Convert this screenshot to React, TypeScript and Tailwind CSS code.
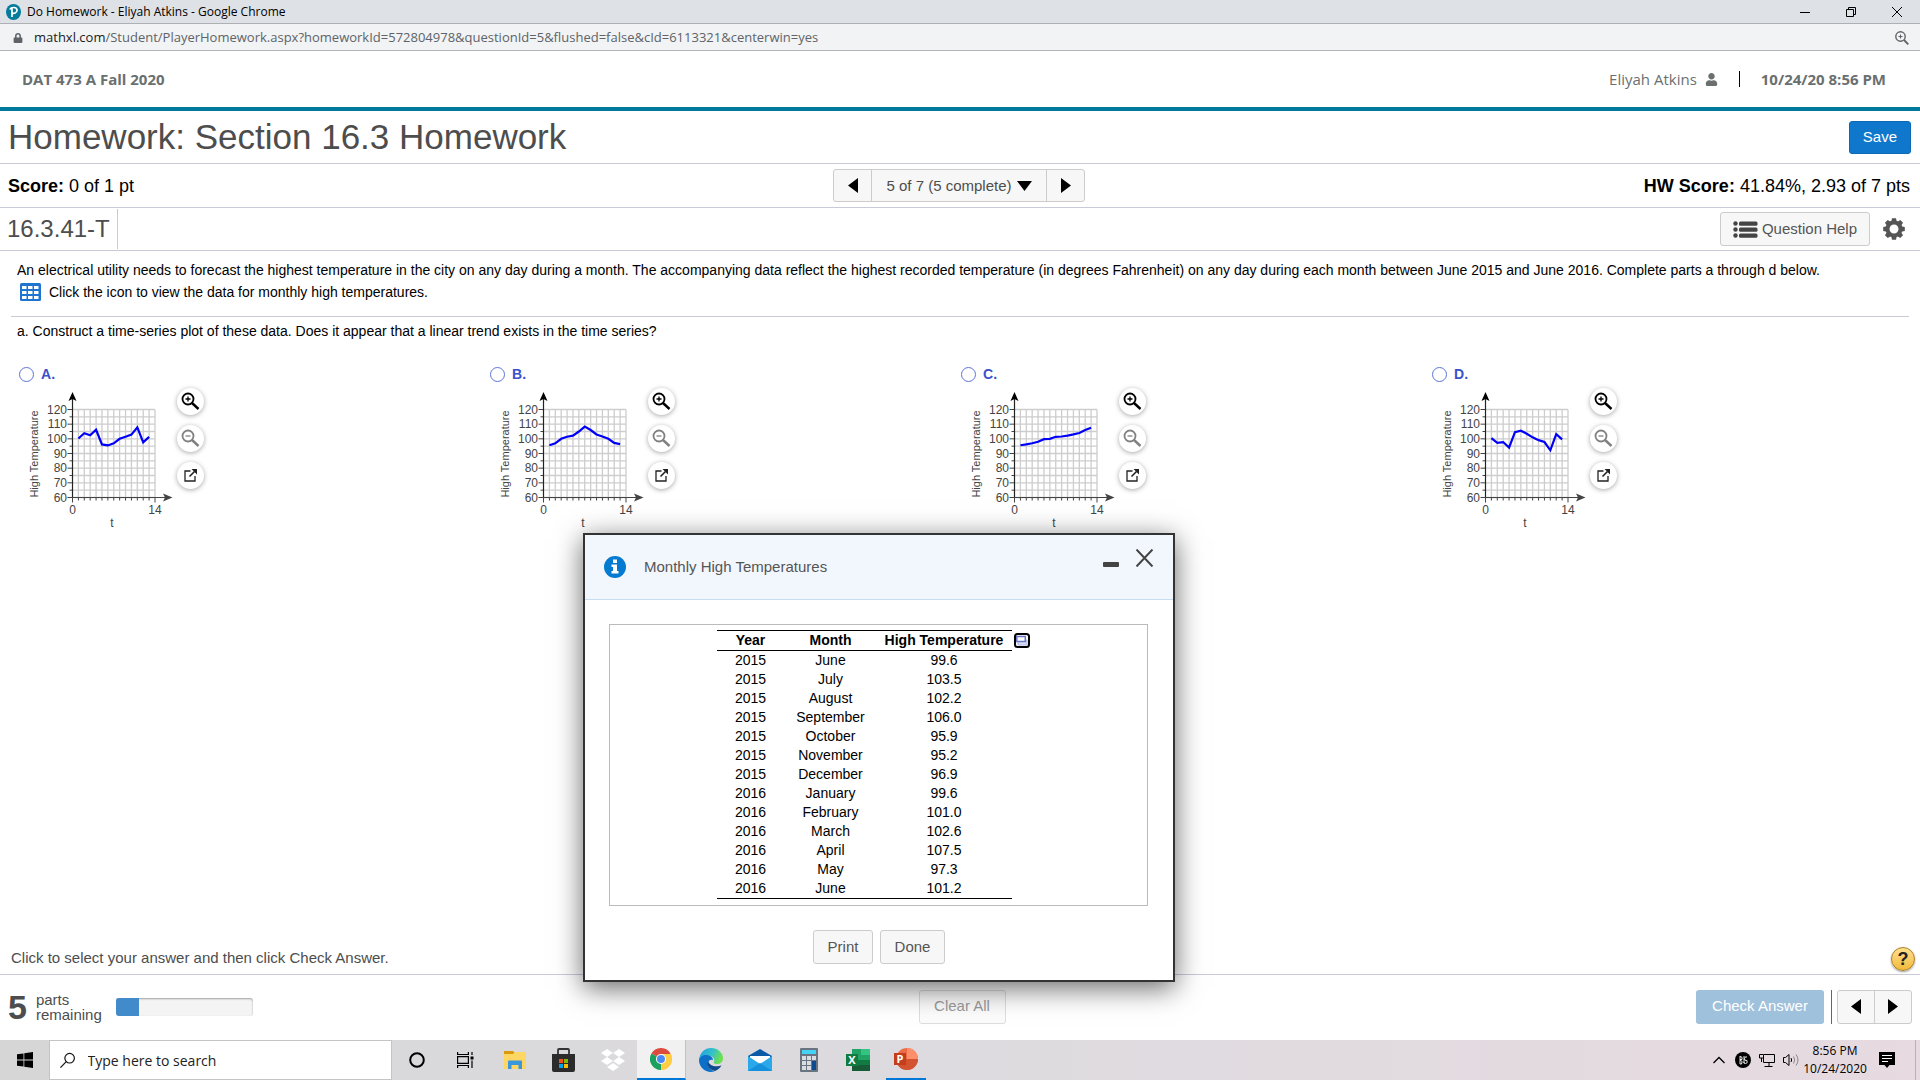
import type { ReactNode } from "react";
import { FaUser, FaLock } from "react-icons/fa";

type Option = {
    letter: string;
    values: number[];
};

const options: Option[] = [
    {
        letter: "A",
        values: [100.2, 103.8, 102.4, 106.2, 96.2, 95.5, 96.9, 100, 101.4, 102.9, 107.8, 97.6, 101.3],
    },
    {
        letter: "B",
        values: [95.6, 96.9, 100, 101.4, 102.2, 105, 108.3, 106, 103, 101.6, 100, 97.2, 96.4],
    },
    {
        letter: "C",
        values: [95.6, 96.2, 97, 98, 99.8, 100, 101.4, 101.6, 102.2, 103, 104, 106, 107.6],
    },
    {
        letter: "D",
        values: [100.5, 97.3, 97.8, 94, 104.6, 105.5, 103.5, 101, 99.1, 97.8, 92.2, 103.2, 99.6],
    },
];

const temperatures = [
    ["2015", "June", "99.6"],
    ["2015", "July", "103.5"],
    ["2015", "August", "102.2"],
    ["2015", "September", "106.0"],
    ["2015", "October", "95.9"],
    ["2015", "November", "95.2"],
    ["2015", "December", "96.9"],
    ["2016", "January", "99.6"],
    ["2016", "February", "101.0"],
    ["2016", "March", "102.6"],
    ["2016", "April", "107.5"],
    ["2016", "May", "97.3"],
    ["2016", "June", "101.2"],
];

/* Plot geometry */
const X0 = 55.5;
const X1 = 138;
const Y0 = 109.5;
const Y1 = 21.5;
const px = (t: number) => X0 + (t * (X1 - X0)) / 14;
const py = (v: number) => Y0 - ((v - 60) * (Y0 - Y1)) / 60;

const Chart = ({ letter, values }: Option) => {
    const points = values.map((v, i) => `${px(i + 1)},${py(v)}`).join(" ");
    const majors = [60, 70, 80, 90, 100, 110, 120];
    const minors = [65, 75, 85, 95, 105, 115];
    const columns = Array.from({ length: 14 }, (_, i) => i + 1);

    return (
        <svg
            width="160"
            height="148"
            viewBox="0 0 160 148"
            role="img"
            aria-label={`Time-series plot ${letter}`}
            className="shrink-0 font-['Liberation_Sans',Arial,sans-serif]"
        >
            <g stroke="#cdcdcd" strokeWidth="1.3">
                {columns.map((t) => (
                    <line key={t} x1={px(t)} x2={px(t)} y1={Y1} y2={Y0} />
                ))}
                {[...majors, ...minors].map((v) => (
                    <line key={v} x1={X0} x2={X1} y1={py(v)} y2={py(v)} />
                ))}
            </g>
            <g stroke="#444" strokeWidth="1">
                {columns.map((t) => (
                    <line key={t} x1={px(t)} x2={px(t)} y1={Y0} y2={t === 14 ? Y0 + 5 : Y0 + 3} />
                ))}
                {majors.map((v) => (
                    <line key={v} x1={X0 - 5} x2={X0} y1={py(v)} y2={py(v)} />
                ))}
                {minors.map((v) => (
                    <line key={v} x1={X0 - 3} x2={X0} y1={py(v)} y2={py(v)} />
                ))}
                <line x1={X0} x2={X0} y1={Y0} y2={Y0 + 5} />
            </g>
            <line x1={X0} x2={X0} y1="8" y2={Y0} stroke="#222" strokeWidth="1.2" />
            <path d="M55.500 4L59.500 13L55.500 11L51.500 13Z" fill="#000" />
            <line x1={X0} x2="150" y1={Y0} y2={Y0} stroke="#444" strokeWidth="1.2" />
            <path d="M155.500 109.500L146 105.500L148 109.500L146 113.500Z" fill="#444" />
            <polyline points={points} fill="none" stroke="#0000fa" strokeWidth="2.2" />
            <g fill="#444" fontSize="12" textAnchor="end">
                {majors.map((v) => (
                    <text key={v} x="50" y={py(v) + 4}>
                        {v}
                    </text>
                ))}
            </g>
            <g fill="#444" fontSize="12" textAnchor="middle">
                <text x={X0} y="126">0</text>
                <text x={X1} y="126">14</text>
                <text x="95" y="139">t</text>
            </g>
            <text
                transform="translate(21 66) rotate(-90)"
                fill="#444"
                fontSize="11"
                textAnchor="middle"
            >
                High Temperature
            </text>
        </svg>
    );
};

const RoundButton = ({ label, children }: { label: string; children: ReactNode }) => (
    <button
        type="button"
        aria-label={label}
        className="flex size-[27px] items-center justify-center rounded-full bg-white shadow-[0_1px_5px_rgba(0,0,0,0.35)]"
    >
        {children}
    </button>
);

const Magnifier = ({ color, plus = false }: { color: string; plus?: boolean }) => (
    <svg width="19" height="19" viewBox="0 0 19 19" fill="none" stroke={color}>
        <circle cx="7" cy="7" r="5.5" strokeWidth="1.8" />
        <path d={plus ? "M4.5 7h5M7 4.5v5" : "M4.5 7h5"} strokeWidth="1.3" />
        <path d="M11 11l6.5 6" strokeWidth="2.4" />
    </svg>
);

const Popout = () => (
    <svg width="15" height="15" viewBox="0 0 15 15" fill="none" stroke="#222">
        <path d="M7.5 3H2v10h10V8" strokeWidth="1.3" />
        <path d="M6.5 8.5l5-5" strokeWidth="1.6" />
        <path d="M8.5 1H14v5.500z" fill="#222" stroke="none" />
    </svg>
);

const Answer = ({ letter, values }: Option) => (
    <div className="flex flex-col">
        <label className="flex h-5 items-center gap-[7px] pl-[2px] text-sm font-bold text-[#3a50cc]">
            <input
                type="radio"
                name="answer"
                className="size-[15px] appearance-none rounded-full border border-[#5c74d8] bg-white"
            />
            {letter}.
        </label>
        <div className="flex items-start pt-1">
            <Chart letter={letter} values={values} />
            <div className="flex flex-col gap-[10px]">
                <RoundButton label={`Zoom in on graph ${letter}`}>
                    <Magnifier color="#000" plus />
                </RoundButton>
                <RoundButton label={`Zoom out of graph ${letter}`}>
                    <Magnifier color="#808080" />
                </RoundButton>
                <RoundButton label={`Open graph ${letter} in a new window`}>
                    <Popout />
                </RoundButton>
            </div>
        </div>
    </div>
);

const Triangle = ({ dir }: { dir: "left" | "right" | "down" }) => {
    if (dir === "down") {
        return (
            <svg width="15" height="10" viewBox="0 0 15 10">
                <path d="M0 0h15L7.500 10z" />
            </svg>
        );
    }
    return (
        <svg width="10" height="15" viewBox="0 0 10 15">
            <path d={dir === "left" ? "M10 0v15L0 7.500z" : "M0 0v15L10 7.500z"} />
        </svg>
    );
};

const WindowBar = () => (
    <div className="flex h-6 items-center justify-between border-b border-[#aeb0b3] bg-[#dee1e6] pl-[6px]">
        <div className="flex items-center gap-[6px]">
            <svg width="15" height="16" viewBox="0 0 15 16">
                <ellipse cx="7.500" cy="8" rx="7.500" ry="8" fill="#047a9c" />
                <path
                    d="M6 13V4.200M3.800 5.500C5 3 11 2.500 11 6.200c0 3-3.500 3.600-4.500 2.800"
                    fill="none"
                    stroke="#fff"
                    strokeWidth="1.7"
                />
            </svg>
            <span className="font-['Open_Sans',sans-serif] text-xs text-black">
                Do Homework - Eliyah Atkins - Google Chrome
            </span>
        </div>
        <div className="flex">
            <button type="button" aria-label="Minimize" className="flex w-[46px] justify-center">
                <svg width="10" height="10" viewBox="0 0 10 10">
                    <path d="M0 5.500h10" stroke="#000" />
                </svg>
            </button>
            <button type="button" aria-label="Restore" className="flex w-[46px] justify-center">
                <svg width="10" height="10" viewBox="0 0 10 10" fill="none" stroke="#000">
                    <path d="M.5 2.500h7v7h-7zM2.500 2.500v-2h7v7h-2" />
                </svg>
            </button>
            <button type="button" aria-label="Close" className="flex w-[46px] justify-center">
                <svg width="10" height="10" viewBox="0 0 10 10" stroke="#000">
                    <path d="M0 0l10 10M10 0L0 10" />
                </svg>
            </button>
        </div>
    </div>
);

const AddressBar = () => (
    <div className="flex h-[27px] items-center justify-between border-b border-[#b4b6b9] bg-[#f1f3f4] pt-px pr-[11px] pl-[13px]">
        <div className="flex items-center gap-[11px]">
            <FaLock className="size-[10px] text-[#5f6368]" />
            <span className="font-['Open_Sans',sans-serif] text-[13px] text-[#5f6368]">
                <span className="text-[#202124]">mathxl.com</span>
                /Student/PlayerHomework.aspx?homeworkId=572804978&amp;questionId=5&amp;flushed=false&amp;cId=6113321&amp;centerwin=yes
            </span>
        </div>
        <button type="button" aria-label="Zoom">
            <svg width="14" height="14" viewBox="0 0 14 14" fill="none" stroke="#5f6368">
                <circle cx="5.500" cy="5.500" r="4.700" strokeWidth="1.4" />
                <path d="M3.500 5.500h4M5.500 3.500v4" />
                <path d="M9 9l4.300 4.300" strokeWidth="1.8" />
            </svg>
        </button>
    </div>
);

const CourseHeader = () => (
    <header className="flex h-[60px] items-center justify-between border-b-4 border-[#007a9c] pr-[34px] pl-[22px] font-['Open_Sans',sans-serif] text-[15px] text-[#6a7070]">
        <span className="font-bold">DAT 473 A Fall 2020</span>
        <div className="flex items-center">
            <span>Eliyah Atkins</span>
            <FaUser className="ml-2 size-[13px]" />
            <span className="mx-[21px] h-4 w-px bg-black" />
            <span className="font-bold">10/24/20 8:56 PM</span>
        </div>
    </header>
);

const TitleRow = () => (
    <div className="flex h-[53px] items-center justify-between border-b border-[#c8cad8] pr-[9px] pl-2">
        <h1 className="text-[35px] leading-[52px] text-[#4d4d4d]">Homework: Section 16.3 Homework</h1>
        <button
            type="button"
            className="h-[33px] rounded-[3px] border border-[#0b69b5] bg-[#0f78cc] px-[13px] text-[15px] text-white"
        >
            Save
        </button>
    </div>
);

const ScoreRow = () => (
    <div className="grid h-[44px] grid-cols-[1fr_auto_1fr] items-center border-b border-[#c8cad8] pr-[10px] pl-2 text-lg text-black">
        <div>
            <b>Score:</b> 0 of 1 pt
        </div>
        <div className="flex h-[33px] rounded-[3px] border border-[#ccc] bg-[#f7f7f7] text-[15px] text-[#4d4d4d]">
            <button type="button" aria-label="Previous question" className="flex w-[38px] items-center justify-center border-r border-[#ccc]">
                <Triangle dir="left" />
            </button>
            <button type="button" className="flex w-[175px] items-center justify-center gap-[5px] border-r border-[#ccc]">
                5 of 7 (5 complete)
                <Triangle dir="down" />
            </button>
            <button type="button" aria-label="Next question" className="flex w-[37px] items-center justify-center">
                <Triangle dir="right" />
            </button>
        </div>
        <div className="text-right">
            <b>HW Score:</b> 41.84%, 2.93 of 7 pts
        </div>
    </div>
);

const Gear = () => (
    <svg width="22" height="22" viewBox="-11 -11 22 22" fill="#555">
        {[0, 45, 90, 135, 180, 225, 270, 315].map((a) => (
            <path key={a} d="M-2.800 -7L-2 -10.800H2L2.800 -7z" transform={`rotate(${a})`} />
        ))}
        <circle r="6.500" fill="none" stroke="#555" strokeWidth="4" />
    </svg>
);

const ExerciseRow = () => (
    <div className="flex h-[43px] items-center justify-between border-b border-[#c8cad8] pr-[15px] pl-[7px]">
        <h2 className="flex h-10 items-center border-r border-[#c8cad8] pr-[7px] pb-px text-2xl text-[#4d4d4d]">
            16.3.41-T
        </h2>
        <div className="flex items-center gap-[13px]">
            <button
                type="button"
                className="flex h-[34px] items-center gap-1 rounded-[3px] border border-[#ccc] bg-[#f7f7f7] px-3 text-[15px] text-[#555]"
            >
                <svg width="25" height="17" viewBox="0 0 25 17" fill="#444">
                    {[2.5, 8.5, 14.5].map((y) => (
                        <g key={y}>
                            <circle cx="2.500" cy={y} r="2.200" />
                            <rect x="6" y={y - 2} width="18.500" height="4.200" rx="1.500" />
                        </g>
                    ))}
                </svg>
                Question Help
            </button>
            <button type="button" aria-label="Settings">
                <Gear />
            </button>
        </div>
    </div>
);

const Question = () => (
    <main className="flex-1 pt-[9px] pr-[19px] pl-[17px] text-sm leading-5 text-black">
        <p>
            An electrical utility needs to forecast the highest temperature in the city on any day during a month. The
            accompanying data reflect the highest recorded temperature (in degrees Fahrenheit) on any day during each
            month between June 2015 and June 2016. Complete parts a through d below.
        </p>
        <button type="button" className="mt-[2px] ml-[3px] flex h-5 items-center gap-2">
            <svg width="21" height="18" viewBox="0 0 21 18">
                <rect width="21" height="18" rx="1.500" fill="#1f74d0" />
                {[4, 9, 14].map((y) =>
                    [2, 8, 14].map((x) => (
                        <rect key={`${x}-${y}`} x={x} y={y - 1} width="4.500" height="3" fill="#fff" />
                    ))
                )}
            </svg>
            Click the icon to view the data for monthly high temperatures.
        </button>
        <hr className="-mr-2 -ml-[6px] mt-[14px] border-[#c8cad8]" />
        <p className="mt-1">
            a. Construct a time-series plot of these data. Does it appear that a linear trend exists in the time series?
        </p>
        <div className="mt-[23px] grid grid-cols-4">
            {options.map((option) => (
                <Answer key={option.letter} {...option} />
            ))}
        </div>
    </main>
);

const Footer = () => (
    <footer className="text-[15px] text-[#4d4d4d]">
        <div className="flex h-8 items-center justify-between border-b border-[#c8cad8] pr-[5px] pl-[11px]">
            <span>Click to select your answer and then click Check Answer.</span>
            <button
                type="button"
                aria-label="Help"
                className="flex size-6 items-center justify-center rounded-full border border-[#a98225] bg-linear-to-b from-[#ffe08a] to-[#f2b93a] text-lg font-bold text-[#222] shadow-[0_1px_2px_rgba(0,0,0,0.4)]"
            >
                ?
            </button>
        </div>
        <div className="grid h-[65px] grid-cols-[1fr_auto_1fr] items-center px-2 pb-[2px]">
            <div className="flex items-center">
                <span className="text-[34px] leading-9 font-bold">5</span>
                <span className="ml-[9px] w-[67px] leading-[15px]">
                    parts
                    <br />
                    remaining
                </span>
                <div
                    role="progressbar"
                    aria-label="Progress"
                    aria-valuenow={1}
                    aria-valuemax={6}
                    className="ml-[13px] h-[18px] w-[137px] overflow-hidden rounded-[3px] bg-[#f4f4f4] shadow-[inset_0_1px_2px_rgba(0,0,0,0.35)]"
                >
                    <div className="h-full w-1/6 bg-[#428bca]" />
                </div>
            </div>
            <button
                type="button"
                disabled
                className="ml-1 h-[34px] w-[87px] rounded-[3px] border border-[#ddd] bg-[#fbfbfb] text-[#999]"
            >
                Clear All
            </button>
            <div className="flex items-center justify-end">
                <button type="button" className="h-[34px] w-32 rounded-[3px] bg-[#9fc1dc] text-white">
                    Check Answer
                </button>
                <span className="mr-[5px] ml-[7px] h-[34px] w-px bg-[#666]" />
                <div className="flex h-[34px] rounded-[3px] border border-[#ccc] bg-[#f7f7f7]">
                    <button type="button" aria-label="Previous part" className="flex w-[37px] items-center justify-center border-r border-[#ccc]">
                        <Triangle dir="left" />
                    </button>
                    <button type="button" aria-label="Next part" className="flex w-9 items-center justify-center">
                        <Triangle dir="right" />
                    </button>
                </div>
            </div>
        </div>
    </footer>
);

const DataDialog = () => (
    <div
        role="dialog"
        aria-label="Monthly High Temperatures"
        className="absolute top-[533px] left-[583px] w-[592px] border-2 border-[#333] bg-white shadow-[0_6px_26px_rgba(0,0,0,0.6)]"
    >
        <div className="flex h-[65px] items-center justify-between border-b border-[#c6def2] bg-[#f2f7fe] pr-[19px] pl-[19px]">
            <div className="flex items-center gap-[18px] text-[15px] text-[#555]">
                <svg width="22" height="22" viewBox="0 0 22 22">
                    <circle cx="11" cy="11" r="11" fill="#047bd0" />
                    <path d="M9 3.500h4v3.500H9zM7.500 8.500H13v6.500h1.500v2.500h-7V15H9v-4H7.500z" fill="#fff" />
                </svg>
                Monthly High Temperatures
            </div>
            <div className="flex items-end gap-4 pb-[19px]">
                <button type="button" aria-label="Minimize dialog">
                    <svg width="16" height="5" viewBox="0 0 16 5">
                        <rect width="16" height="5" rx="1" fill="#444" />
                    </svg>
                </button>
                <button type="button" aria-label="Close dialog">
                    <svg width="19" height="18" viewBox="0 0 19 18" fill="none" stroke="#444" strokeWidth="2">
                        <path d="M1.500 .5l16 17M17.500 .5l-16 17" />
                    </svg>
                </button>
            </div>
        </div>
        <div className="mr-[25px] ml-6 mt-6 flex items-start justify-center gap-[2px] border border-[#bbb] pt-[5px] pr-[11px] pb-[6px]">
            <table className="border-y border-black text-center text-sm text-black">
                <thead>
                    <tr className="h-5 border-b border-black leading-[18px]">
                        <th className="w-[68px] p-0 pb-px">Year</th>
                        <th className="w-[92px] p-0 pb-px">Month</th>
                        <th className="w-[135px] p-0 pb-px">High Temperature</th>
                    </tr>
                </thead>
                <tbody>
                    {temperatures.map(([year, month, high]) => (
                        <tr key={year + month} className="h-[19px] leading-[19px]">
                            <td className="p-0">{year}</td>
                            <td className="p-0">{month}</td>
                            <td className="p-0">{high}</td>
                        </tr>
                    ))}
                </tbody>
            </table>
            <button type="button" aria-label="Copy table" className="mt-[3px]">
                <svg width="16" height="15" viewBox="0 0 16 15" fill="none">
                    <rect x="1" y="1" width="14" height="13" rx="2.500" fill="#fff" stroke="#000" strokeWidth="2" />
                    <path d="M4 9v3h9V7h-1" fill="#d9def4" stroke="#b0b8e2" strokeWidth="1" />
                    <rect x="2.800" y="3.500" width="8.500" height="5" fill="#fff" stroke="#6a78c4" strokeWidth="1.500" />
                </svg>
            </button>
        </div>
        <div className="flex justify-center gap-[7px] pt-6 pb-4 text-[15px] text-[#555]">
            <button type="button" className="h-[34px] w-[60px] rounded-[3px] border border-[#ccc] bg-[#f7f7f7]">
                Print
            </button>
            <button type="button" className="h-[34px] w-[65px] rounded-[3px] border border-[#ccc] bg-[#f7f7f7]">
                Done
            </button>
        </div>
    </div>
);

const TaskButton = ({
    label,
    className = "",
    children,
}: {
    label: string;
    className?: string;
    children: ReactNode;
}) => (
    <button type="button" aria-label={label} className={`flex w-[49px] items-center justify-center ${className}`}>
        {children}
    </button>
);

const Taskbar = () => (
    <div className="flex h-10 items-stretch justify-between bg-linear-to-r from-[#d6d6d7] via-[#dddbdf] to-[#e7dae1] font-['Open_Sans',sans-serif]">
        <div className="flex">
            <TaskButton label="Start">
                <svg width="16" height="16" viewBox="0 0 16 16">
                    <path d="M0 2.300L6.500 1.400v6.200H0zM7.300 1.300L16 0v7.600H7.300zM0 8.400h6.500v6.200L0 13.700zM7.300 8.400H16V16l-8.700-1.300z" />
                </svg>
            </TaskButton>
            <label className="flex w-[343px] items-center gap-3 border border-[#c4c4c4] bg-white pl-[10px]">
                <svg width="17" height="17" viewBox="0 0 17 17" fill="none" stroke="#111" strokeWidth="1.300">
                    <circle cx="10.500" cy="6" r="5.200" />
                    <path d="M6.800 9.800L.5 16.300" />
                </svg>
                <input
                    type="text"
                    aria-label="Search"
                    placeholder="Type here to search"
                    className="w-full bg-transparent pt-px text-sm outline-none placeholder:text-[#222]"
                />
            </label>
            <TaskButton label="Cortana">
                <svg width="16" height="16" viewBox="0 0 16 16">
                    <circle cx="8" cy="8" r="6.800" fill="none" stroke="#000" strokeWidth="2" />
                </svg>
            </TaskButton>
            <TaskButton label="Task view">
                <svg width="17" height="16" viewBox="0 0 17 16" fill="none" stroke="#000" strokeWidth="1.200">
                    <path d="M.6 0v2.500h10.800V0M.6 16v-2.500h10.800V16M.6 4.600h10.800v6.800H.6zM15 0v3M15 8.500V16" />
                    <rect x="13.500" y="4.500" width="3" height="3" fill="#000" stroke="none" />
                </svg>
            </TaskButton>
            <TaskButton label="File Explorer">
                <svg width="22" height="20" viewBox="0 0 22 20">
                    <path d="M0 1h9l2 2h-1v3H0z" fill="#d99a0b" />
                    <path d="M0 4h9l2-2h11v17H0z" fill="#fdd663" />
                    <path d="M4 19v-7.500q0-1 1-1h12q1 0 1 1V19h-3.500v-4h-7v4z" fill="#3b97dc" />
                </svg>
            </TaskButton>
            <TaskButton label="Microsoft Store">
                <svg width="23" height="24" viewBox="0 0 23 24">
                    <path d="M6 8V2q0-1 1-1h9q1 0 1 1v6" fill="none" stroke="#333" strokeWidth="1.800" />
                    <path d="M0 6h23v16q0 2-2 2H2q-2 0-2-2z" fill="#2b2b2b" />
                    <path d="M7 11h4v4H7z" fill="#f25022" />
                    <path d="M12 11h4v4h-4z" fill="#7fba00" />
                    <path d="M7 16h4v4H7z" fill="#00a4ef" />
                    <path d="M12 16h4v4h-4z" fill="#ffb900" />
                </svg>
            </TaskButton>
            <TaskButton label="Dropbox">
                <svg width="24" height="22" viewBox="0 0 24 22" fill="#fff">
                    <path d="M6 0l6 4-6 4-6-4zM18 0l6 4-6 4-6-4zM6 8l6 4-6 4-6-4zM18 8l6 4-6 4-6-4zM12 14l6 4-6 4-6-4z" />
                </svg>
            </TaskButton>
            <TaskButton label="Google Chrome" className="border-r border-b-2 border-r-[#c2c1c4] border-b-[#0078d7] bg-[#f2f1f2]">
                <svg width="22" height="22" viewBox="0 0 48 48">
                    <path d="M24 24L3.200 12A24 24 0 0 1 44.800 12z" fill="#dd4b3e" />
                    <path d="M24 24L44.800 12A24 24 0 0 1 24 48z" fill="#ffcd42" />
                    <path d="M24 24L24 48A24 24 0 0 1 3.200 12z" fill="#1ba05e" />
                    <path d="M24 13h21.300A24 24 0 0 1 24 48l9.500-18.500z" fill="#ffcd42" />
                    <circle cx="24" cy="24" r="11" fill="#fff" />
                    <circle cx="24" cy="24" r="8.700" fill="#4a8af4" />
                </svg>
            </TaskButton>
            <TaskButton label="Microsoft Edge">
                <svg width="24" height="24" viewBox="0 0 24 24">
                    <defs>
                        <linearGradient id="edge-top" x1="0" x2="1" y1="0" y2="0.300">
                            <stop offset="0" stopColor="#1b9de2" />
                            <stop offset="0.600" stopColor="#35c1c9" />
                            <stop offset="1" stopColor="#6be04e" />
                        </linearGradient>
                    </defs>
                    <path d="M0 12C1 4 6 0 12 0c7 0 12 5 12 10 0 4-3 6-6 6-2 0-4-1-3-2 1-2 0-5-4-6C6 7 2 9 0 12z" fill="url(#edge-top)" />
                    <path d="M0 12c1-4 5-5.500 8-5 4 .5 6 3 6 5-2-1-5 0-5 4 0 4 4 7 7 7.200C8 26 0 20 0 12z" fill="#0c6fc8" />
                    <path d="M9 13c-2 5 2 9 7 10 3-1 5-3 6.500-5.500-.5-.5-4 1.500-8 .5-3-.8-5-3-5.500-5z" fill="#114a8b" />
                </svg>
            </TaskButton>
            <TaskButton label="Mail">
                <svg width="24" height="22" viewBox="0 0 24 22">
                    <path d="M12 0l12 7v3H0V7z" fill="#0a5aa8" />
                    <path d="M2 7h20v7H2z" fill="#fff" />
                    <path d="M0 7l12 8 12-8v15H0z" fill="#2aa8ea" />
                    <path d="M0 22l12-8 12 8z" fill="#1590dc" />
                </svg>
            </TaskButton>
            <TaskButton label="Calculator">
                <svg width="18" height="24" viewBox="0 0 18 24">
                    <rect width="18" height="24" rx="1" fill="#6a7480" />
                    <rect x="2" y="2" width="14" height="4" fill="#43d3f5" />
                    {[8, 13, 18].map((y) =>
                        [2, 7, 12].map((x) => (
                            <rect key={`${x}-${y}`} x={x} y={y} width="4" height="4" fill="#d9dde2" />
                        ))
                    )}
                    <rect x="12" y="13" width="4" height="9" fill="#0d4a8f" />
                </svg>
            </TaskButton>
            <TaskButton label="Excel">
                <svg width="24" height="22" viewBox="0 0 24 22">
                    <path d="M6 0h9v11H6z" fill="#21a366" />
                    <path d="M15 0h9v6h-9z" fill="#33c481" />
                    <path d="M15 6h9v5h-9z" fill="#21a366" />
                    <path d="M6 11h18v6H6z" fill="#107c41" />
                    <path d="M6 16h18v6H6z" fill="#185c37" />
                    <rect y="5" width="12" height="12" fill="#107c41" />
                    <text x="6" y="15" fill="#fff" fontSize="11" fontWeight="700" textAnchor="middle">
                        X
                    </text>
                </svg>
            </TaskButton>
            <div className="flex px-1">
                <button
                    type="button"
                    aria-label="PowerPoint"
                    className="flex w-10 items-center justify-center border-b-2 border-[#0078d7]"
                >
                    <svg width="24" height="22" viewBox="0 0 24 22">
                        <circle cx="13" cy="11" r="11" fill="#ed6c47" />
                        <path d="M13 0a11 11 0 0 1 11 11H13z" fill="#ff8f6b" />
                        <path d="M2 11h22a11 11 0 0 1-22 0z" fill="#d35230" />
                        <rect y="5" width="12" height="12" fill="#c43e1c" />
                        <text x="6" y="15" fill="#fff" fontSize="11" fontWeight="700" textAnchor="middle">
                            P
                        </text>
                    </svg>
                </button>
            </div>
        </div>
        <div className="flex items-center text-black">
            <button type="button" aria-label="Show hidden icons" className="mr-[10px]">
                <svg width="12" height="8" viewBox="0 0 12 8" fill="none" stroke="#000" strokeWidth="1.300">
                    <path d="M.5 7L6 1.500 11.500 7" />
                </svg>
            </button>
            <svg width="16" height="16" viewBox="0 0 16 16" className="mr-2">
                <circle cx="8" cy="8" r="8" />
                <path
                    d="M5 4v8M5 4.500q3 0 2 3H5M5 8q3.500 1 1.500 4H5M9 4v7M12 5q-2-1-2.500 1.500T12 8.500q1 3-1.500 3T9 10"
                    fill="none"
                    stroke="#fff"
                    strokeWidth="0.900"
                />
            </svg>
            <svg width="16" height="14" viewBox="0 0 16 14" fill="none" stroke="#000" className="mr-2">
                <path d="M5 1.500h10.500v8H4.500V5M.5 1.500h4V5h-4zM10 9.500v3.500M5.500 13.500h8M2.500 5v4" />
            </svg>
            <svg width="17" height="14" viewBox="0 0 17 14" fill="none" stroke="#000" className="mr-[5px]">
                <path d="M.5 4.500h2L6 1.500v11L2.500 9.500h-2zM8 5q1.300 2 0 4" />
                <path d="M10.500 3.500q2.500 3.500 0 7M13 1.500q4 5.500 0 11" stroke="#8a8488" />
            </svg>
            <div className="flex w-[60px] flex-col items-center text-xs leading-[18px]">
                <span>8:56 PM</span>
                <span>10/24/2020</span>
            </div>
            <button type="button" aria-label="Notifications" className="ml-[14px]">
                <svg width="16" height="16" viewBox="0 0 16 16">
                    <path d="M0 0h16v13h-5.500L8 16l-2.500-3H0z" />
                    <path d="M3 3.500h10M3 6.500h10M3 9.500h6" stroke="#fff" />
                </svg>
            </button>
            <span className="mr-1 ml-5 h-full w-px bg-[#b9afb4]" />
        </div>
    </div>
);

const App = () => {
    return (
        <div className="relative flex min-h-screen flex-col bg-white font-['Liberation_Sans',Arial,sans-serif]">
            <WindowBar />
            <AddressBar />
            <CourseHeader />
            <TitleRow />
            <ScoreRow />
            <ExerciseRow />
            <Question />
            <Footer />
            <Taskbar />
            <DataDialog />
        </div>
    );
};

export default App;
